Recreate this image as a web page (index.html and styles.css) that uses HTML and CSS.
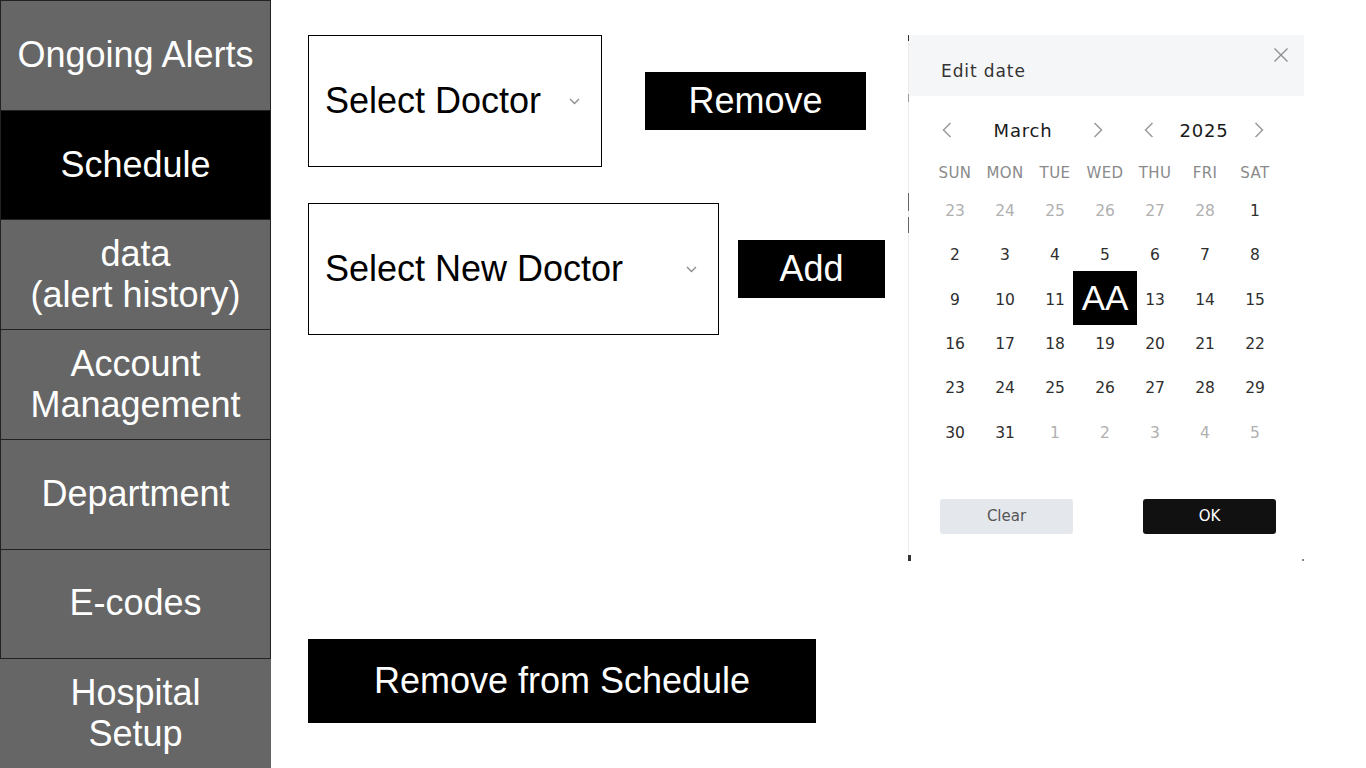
FILE: index.html
```html
<!DOCTYPE html>
<html lang="en">
<head>
<meta charset="utf-8">
<title>Schedule</title>
<link rel="stylesheet" href="styles.css">
</head>
<body>
<nav class="sidebar">
  <div class="nav-item">Ongoing Alerts</div>
  <div class="nav-item active">Schedule</div>
  <div class="nav-item">data<br>(alert history)</div>
  <div class="nav-item">Account<br>Management</div>
  <div class="nav-item">Department</div>
  <div class="nav-item">E-codes</div>
  <div class="nav-item last">Hospital<br>Setup</div>
</nav>
<main class="main">
  <section class="controls">
    <div class="row row-one">
      <div class="select select-doctor">
        <span>Select Doctor</span>
        <svg class="chev" width="11" height="7" viewBox="0 0 11 7"><polyline points="1,1 5.5,5.5 10,1" fill="none" stroke="#8a8a8a" stroke-width="1.3"/></svg>
      </div>
      <button class="btn btn-remove">Remove</button>
    </div>
    <div class="row row-two">
      <div class="select select-new">
        <span>Select New Doctor</span>
        <svg class="chev" width="11" height="7" viewBox="0 0 11 7"><polyline points="1,1 5.5,5.5 10,1" fill="none" stroke="#8a8a8a" stroke-width="1.3"/></svg>
      </div>
      <button class="btn btn-add">Add</button>
    </div>
    <button class="btn btn-schedule">Remove from Schedule</button>
  </section>

  <section class="picker">
    <span class="mark mark-tl"></span>
    <span class="mark mark-l1"></span>
    <span class="mark mark-l2"></span>
    <span class="mark mark-l3"></span>
    <span class="mark mark-bl"></span>
    <span class="mark mark-br"></span>
    <header class="picker-head">
      <span class="picker-title">Edit date</span>
      <svg class="close" width="16" height="16" viewBox="0 0 16 16"><path d="M1.5 1.5 L14.5 14.5 M14.5 1.5 L1.5 14.5" stroke="#8f8f8f" stroke-width="1.4" fill="none"/></svg>
    </header>
    <div class="picker-nav">
      <span class="arrow a1"><svg width="10" height="16" viewBox="0 0 10 16"><polyline points="8.5,1 1.5,8 8.5,15" fill="none" stroke="#9a9a9a" stroke-width="1.5"/></svg></span>
      <span class="nav-label month">March</span>
      <span class="arrow a2"><svg width="10" height="16" viewBox="0 0 10 16"><polyline points="1.5,1 8.5,8 1.5,15" fill="none" stroke="#9a9a9a" stroke-width="1.5"/></svg></span>
      <span class="nav-gap"></span>
      <span class="arrow a3"><svg width="10" height="16" viewBox="0 0 10 16"><polyline points="8.5,1 1.5,8 8.5,15" fill="none" stroke="#9a9a9a" stroke-width="1.5"/></svg></span>
      <span class="nav-label year">2025</span>
      <span class="arrow a4"><svg width="10" height="16" viewBox="0 0 10 16"><polyline points="1.5,1 8.5,8 1.5,15" fill="none" stroke="#9a9a9a" stroke-width="1.5"/></svg></span>
    </div>
    <div class="cal">
      <span class="dow">SUN</span><span class="dow">MON</span><span class="dow">TUE</span><span class="dow">WED</span><span class="dow">THU</span><span class="dow">FRI</span><span class="dow">SAT</span>
      <span class="day out">23</span><span class="day out">24</span><span class="day out">25</span><span class="day out">26</span><span class="day out">27</span><span class="day out">28</span><span class="day">1</span>
      <span class="day">2</span><span class="day">3</span><span class="day">4</span><span class="day">5</span><span class="day">6</span><span class="day">7</span><span class="day">8</span>
      <span class="day">9</span><span class="day">10</span><span class="day">11</span><span class="day sel"><span class="sel-box">AA</span></span><span class="day">13</span><span class="day">14</span><span class="day">15</span>
      <span class="day">16</span><span class="day">17</span><span class="day">18</span><span class="day">19</span><span class="day">20</span><span class="day">21</span><span class="day">22</span>
      <span class="day">23</span><span class="day">24</span><span class="day">25</span><span class="day">26</span><span class="day">27</span><span class="day">28</span><span class="day">29</span>
      <span class="day">30</span><span class="day">31</span><span class="day out">1</span><span class="day out">2</span><span class="day out">3</span><span class="day out">4</span><span class="day out">5</span>
    </div>
    <div class="picker-actions">
      <button class="pbtn clear">Clear</button>
      <button class="pbtn ok">OK</button>
    </div>
  </section>
</main>
</body>
</html>
```

FILE: styles.css
```css
* { box-sizing: border-box; }
html, body { margin: 0; padding: 0; }
body {
  width: 1366px;
  height: 768px;
  overflow: hidden;
  background: #fff;
  display: flex;
  font-family: "Liberation Sans", Arial, sans-serif;
}

.sidebar {
  width: 271px;
  height: 768px;
  display: flex;
  flex-direction: column;
  flex-shrink: 0;
}
.nav-item {
  flex: 1;
  display: flex;
  align-items: center;
  justify-content: center;
  text-align: center;
  background: #666666;
  color: #fff;
  font-size: 36px;
  line-height: 41px;
  border: 1px solid #222;
  padding-bottom: 2px;
}
.nav-item + .nav-item { margin-top: -1px; }
.nav-item.active { background: #000; }
.nav-item.last { border: none; margin-top: 0; }

.main {
  flex: 1;
  display: flex;
  gap: 23px;
  padding: 35px 0 0 37px;
}

.controls {
  width: 577px;
  display: flex;
  flex-direction: column;
  align-items: flex-start;
}
.row {
  display: flex;
  align-items: center;
}
.row-one { gap: 43px; }
.row-two { gap: 19px; margin-top: 36px; }

.select {
  height: 132px;
  border: 1px solid #000;
  display: flex;
  align-items: center;
  justify-content: space-between;
  padding: 0 21px 0 16px;
  font-size: 36px;
  color: #000;
  background: #fff;
}
.select-doctor { width: 294px; }
.select-new { width: 411px; }

.btn {
  background: #000;
  color: #fff;
  border: none;
  font-family: "Liberation Sans", Arial, sans-serif;
  font-size: 36px;
  padding: 0;
  display: flex;
  align-items: center;
  justify-content: center;
}
.btn-remove { width: 221px; height: 58px; }
.btn-add { width: 147px; height: 58px; }
.btn-schedule {
  width: 508px;
  height: 84px;
  margin-top: 304px;
}

/* date picker */
.picker {
  position: relative;
  width: 396px;
  height: 526px;
  background: #fff;
  border-left: 1px solid #ececec;
  font-family: "DejaVu Sans", "Noto Sans", sans-serif;
  display: flex;
  flex-direction: column;
}
.mark { position: absolute; background: #333; width: 1px; }
.mark-tl { left: -1px; top: 0; height: 6px; width: 2px; }
.mark-l1 { left: -1px; top: 59px; height: 8px; background: #999; }
.mark-l2 { left: -1px; top: 158px; height: 18px; background: #666; }
.mark-l3 { left: -1px; top: 182px; height: 16px; background: #666; }
.mark-bl { left: -1px; bottom: 0; height: 6px; width: 3px; }
.mark-br { right: 0; bottom: 0; height: 2px; width: 2px; background: #888; }

.picker-head {
  position: relative;
  height: 61px;
  background: #f5f6f8;
  padding: 26px 0 0 32px;
}
.picker-title {
  font-size: 17px;
  line-height: 20px;
  letter-spacing: 0.9px;
  color: #333;
}
.close { position: absolute; top: 12px; right: 15px; }

.picker-nav {
  display: flex;
  align-items: center;
  height: 30px;
  margin-top: 19px;
  padding-left: 21px;
}
.arrow {
  width: 30px;
  display: flex;
  justify-content: center;
}
.a1 { width: 33px; }
.nav-label {
  text-align: center;
  font-size: 18px;
  letter-spacing: 0.8px;
  color: #1a1a1a;
}
.month { width: 120px; }
.year { width: 80px; }
.nav-gap { width: 21px; }

.cal {
  display: grid;
  grid-template-columns: repeat(7, 50px);
  grid-template-rows: 35px repeat(6, 44.3px);
  margin: 9px 0 0 21px;
}
.dow {
  display: flex;
  align-items: center;
  justify-content: center;
  font-size: 15px;
  letter-spacing: 0.4px;
  color: #8a8a8a;
  padding-top: 2px;
}
.day {
  position: relative;
  display: flex;
  align-items: center;
  justify-content: center;
  font-size: 15.5px;
  color: #2e2e2e;
}
.day.out { color: #b0b0b0; }
.sel-box {
  position: absolute;
  left: -7px;
  top: -7px;
  width: 64px;
  height: 54px;
  background: #000;
  color: #fff;
  font-family: "Liberation Sans", Arial, sans-serif;
  font-size: 35px;
  display: flex;
  align-items: center;
  justify-content: center;
}

.picker-actions {
  display: flex;
  justify-content: space-between;
  margin-top: 44px;
  padding: 0 28px 0 31px;
}
.pbtn {
  width: 133px;
  height: 35px;
  border: none;
  border-radius: 3px;
  font-family: "DejaVu Sans", "Noto Sans", sans-serif;
  font-size: 15px;
}
.clear { background: #e4e7eb; color: #555; }
.ok { background: #111; color: #fff; }
```
